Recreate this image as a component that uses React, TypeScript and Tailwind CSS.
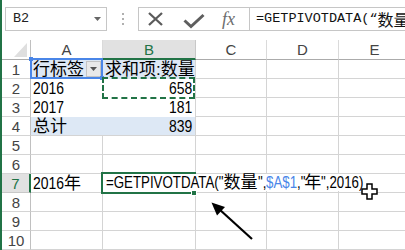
import React from "react";

const cellFont = "font-['Liberation_Sans','Noto_Sans_CJK_SC',sans-serif]";
const monoFont = "font-['Liberation_Mono','Noto_Sans_CJK_SC',monospace]";

const grid = "border-[#d4d4d4]";

function RowHead({ n, active }: { n: number; active?: boolean }) {
  return (
    <div
      className={
        "h-[19px] flex items-center justify-center text-[15px] leading-none border-b " +
        (active
          ? "bg-[#e1e1e1] text-[#217346] border-r-2 border-r-[#217346] border-b-[#c8c8c8]"
          : "text-[#444] border-r border-r-[#c0c0c0] border-b-[#d4d4d4]")
      }
    >
      {n}
    </div>
  );
}

function Cell({
  children,
  className = "",
}: {
  children?: React.ReactNode;
  className?: string;
}) {
  return (
    <div
      className={
        "h-[19px] flex items-center whitespace-nowrap text-[17px] leading-none text-black " +
        className
      }
    >
      {children}
    </div>
  );
}

function NumL({ children }: { children: React.ReactNode }) {
  return <span className="inline-block origin-left scale-x-[0.82]">{children}</span>;
}

function NumR({ children }: { children: React.ReactNode }) {
  return <span className="inline-block origin-right scale-x-[0.82]">{children}</span>;
}

export default function App() {
  const emptyRows = [5, 6, 8, 9, 10];
  return (
    <div className={"relative w-[405px] h-[250px] overflow-hidden bg-white flex " + cellFont}>
      <div className="w-[2px] shrink-0 bg-[#217346]" />
      <div className="flex-1 flex flex-col min-w-0">
        {/* Formula bar */}
        <div className="h-[40px] shrink-0 flex items-start pt-[7px]">
          <div className="ml-[3px] w-[102px] h-[24px] border border-[#c6c6c6] flex items-center justify-between pl-[7px] pr-[5px]">
            <span className={"text-[13.5px] text-[#222] " + monoFont}>B2</span>
            <svg width="7" height="4" viewBox="0 0 7 4">
              <path d="M0 0 H7 L3.5 4 Z" fill="#666" />
            </svg>
          </div>
          <div className="w-[31px] h-[24px] flex flex-col items-center justify-center gap-[3px]">
            <div className="w-[2px] h-[2px] bg-[#b0b0b0]" />
            <div className="w-[2px] h-[2px] bg-[#b0b0b0]" />
            <div className="w-[2px] h-[2px] bg-[#b0b0b0]" />
          </div>
          <div className="flex-1 h-[24px] border-y border-l border-[#c6c6c6] flex min-w-0 overflow-hidden">
            <div className="relative w-[110px] shrink-0 h-full">
              <svg className="absolute left-[8px] top-[3px]" width="17" height="16" viewBox="0 0 17 16">
                <path d="M2 2 L15 14 M15 2 L2 14" stroke="#5b5b5b" strokeWidth="2.3" fill="none" />
              </svg>
              <svg className="absolute left-[44px] top-[5px]" width="22" height="16" viewBox="0 0 22 16">
                <path d="M1.5 7.5 L8 13.5 L20.5 2" stroke="#5e5e5e" strokeWidth="3" fill="none" />
              </svg>
              <span className="absolute left-[83px] top-[1px] text-[18px] leading-[20px] italic text-[#6d6d6d] font-['Liberation_Serif',serif]">
                fx
              </span>
            </div>
            <div className="border-l border-[#c6c6c6] h-full flex items-center pl-[6px] whitespace-nowrap">
              <span className={"text-[13.5px] text-[#111] " + monoFont}>=GETPIVOTDATA(“</span>
              <span className="text-[16px] text-[#111] font-['Noto_Sans_CJK_SC',sans-serif] leading-none">
                数量
              </span>
            </div>
          </div>
        </div>

        {/* Grid */}
        <div className="grid grid-cols-[29px_72px_93px_71px_72px_72px]">
          {/* header row */}
          <div className="h-[20px] border-r border-r-[#c0c0c0] border-b border-b-[#ababab] relative">
            <svg className="absolute left-[12px] top-[3px]" width="13" height="14" viewBox="0 0 13 14">
              <path d="M13 0 V14 H0 Z" fill="#dfdfdf" />
            </svg>
          </div>
          <div className="h-[20px] flex items-center justify-center text-[15px] leading-none text-[#444] border-r border-r-[#dadada] border-b border-b-[#ababab]">
            A
          </div>
          <div className="h-[20px] flex items-center justify-center text-[15px] leading-none text-[#217346] bg-[#e1e1e1] border-r border-r-[#c8c8c8] border-b-2 border-b-[#217346]">
            B
          </div>
          <div className="h-[20px] flex items-center justify-center text-[15px] leading-none text-[#444] border-r border-r-[#dadada] border-b border-b-[#ababab]">
            C
          </div>
          <div className="h-[20px] flex items-center justify-center text-[15px] leading-none text-[#444] border-r border-r-[#dadada] border-b border-b-[#ababab]">
            D
          </div>
          <div className="h-[20px] flex items-center justify-center text-[15px] leading-none text-[#444] border-r border-r-[#dadada] border-b border-b-[#ababab]">
            E
          </div>

          {/* row 1 */}
          <RowHead n={1} />
          <Cell className="bg-[#dde8f5] pl-[2px] relative">
            行标签
            <div className="absolute right-[2px] top-[1px] w-[15px] h-[16px] bg-[#e9e9e9] border border-[#c4c4c4] flex items-center justify-center">
              <svg width="7" height="4" viewBox="0 0 7 4">
                <path d="M0 0 H7 L3.5 4 Z" fill="#555" />
              </svg>
            </div>
          </Cell>
          <Cell className={"bg-[#dde8f5] pl-[2px] border-r " + grid}>求和项:数量</Cell>
          <Cell className={"border-r border-b " + grid} />
          <Cell className={"border-r border-b " + grid} />
          <Cell className={"border-r border-b " + grid} />

          {/* row 2 */}
          <RowHead n={2} />
          <Cell className="pl-[2px]">
            <NumL>2016</NumL>
          </Cell>
          <Cell className={"justify-end pr-[3px] border-r " + grid}>
            <NumR>658</NumR>
          </Cell>
          <Cell className={"border-r border-b " + grid} />
          <Cell className={"border-r border-b " + grid} />
          <Cell className={"border-r border-b " + grid} />

          {/* row 3 */}
          <RowHead n={3} />
          <Cell className="pl-[2px]">
            <NumL>2017</NumL>
          </Cell>
          <Cell className={"justify-end pr-[3px] border-r " + grid}>
            <NumR>181</NumR>
          </Cell>
          <Cell className={"border-r border-b " + grid} />
          <Cell className={"border-r border-b " + grid} />
          <Cell className={"border-r border-b " + grid} />

          {/* row 4 */}
          <RowHead n={4} />
          <Cell className={"bg-[#dde8f5] pl-[2px] border-b " + grid}>总计</Cell>
          <Cell className={"bg-[#dde8f5] justify-end pr-[3px] border-r border-b " + grid}>
            <NumR>839</NumR>
          </Cell>
          <Cell className={"border-r border-b " + grid} />
          <Cell className={"border-r border-b " + grid} />
          <Cell className={"border-r border-b " + grid} />

          {/* rows 5-6 */}
          {emptyRows.slice(0, 2).map((n) => (
            <React.Fragment key={n}>
              <RowHead n={n} />
              <Cell className={"border-r border-b " + grid} />
              <Cell className={"border-r border-b " + grid} />
              <Cell className={"border-r border-b " + grid} />
              <Cell className={"border-r border-b " + grid} />
              <Cell className={"border-r border-b " + grid} />
            </React.Fragment>
          ))}

          {/* row 7 */}
          <RowHead n={7} active />
          <Cell className={"pl-[2px] border-r border-b " + grid}>
            <span className="inline-block w-[31px] shrink-0">
              <NumL>2016</NumL>
            </span>
            <span>年</span>
          </Cell>
          <Cell className={"border-r border-b " + grid} />
          <Cell className={"border-r border-b " + grid} />
          <Cell className={"border-r border-b " + grid} />
          <Cell className={"border-r border-b " + grid} />

          {/* rows 8-10 */}
          {emptyRows.slice(2).map((n) => (
            <React.Fragment key={n}>
              <RowHead n={n} />
              <Cell className={"border-r border-b " + grid} />
              <Cell className={"border-r border-b " + grid} />
              <Cell className={"border-r border-b " + grid} />
              <Cell className={"border-r border-b " + grid} />
              <Cell className={"border-r border-b " + grid} />
            </React.Fragment>
          ))}
        </div>
      </div>

      {/* A1 range-finder border */}
      <div className="absolute left-[30px] top-[58px] w-[73px] h-[21px] border-2 border-[#4a86e8] pointer-events-none" />
      <div className="absolute left-[29px] top-[57px] w-[4px] h-[4px] bg-[#4a86e8]" />
      <div className="absolute left-[100px] top-[76px] w-[4px] h-[4px] bg-[#4a86e8]" />

      {/* B2 marching ants */}
      <div className="absolute left-[102px] top-[77px] w-[93px] h-[22px] border-2 border-dashed border-[#217346]" />

      {/* B7 active cell */}
      <div className="absolute left-[101px] top-[172px] w-[95px] h-[22px] border-2 border-[#217346]" />
      <div className="absolute left-[191px] top-[190px] w-[6px] h-[6px] bg-[#217346] border border-white" />

      {/* in-cell editor text */}
      <div className="absolute left-[103px] top-[174px] h-[17px] bg-white pl-[3px] pr-[1px] flex items-center whitespace-nowrap text-[16px] leading-none text-black">
        <span className="inline-block shrink-0 w-[117.5px]">
          <span className="inline-block origin-left scale-x-[0.83]">=GETPIVOTDATA("</span>
        </span>
        <span className="shrink-0 text-[17px]">数量</span>
        <span className="inline-block shrink-0 w-[8.4px]">
          <span className="inline-block origin-left scale-x-[0.83]">",</span>
        </span>
        <span className="inline-block shrink-0 w-[31px] text-[#4a86e8]">
          <span className="inline-block origin-left scale-x-[0.83]">$A$1</span>
        </span>
        <span className="inline-block shrink-0 w-[7.4px]">
          <span className="inline-block origin-left scale-x-[0.83]">,"</span>
        </span>
        <span className="shrink-0 text-[17px]">年</span>
        <span className="inline-block shrink-0 w-[42.4px]">
          <span className="inline-block origin-left scale-x-[0.83]">",2016)</span>
        </span>
      </div>

      {/* cursor + arrow */}
      <svg className="absolute left-0 top-0 pointer-events-none" width="405" height="250" viewBox="0 0 405 250">
        <path
          d="M367 184 H372 V189 H377 V194 H372 V199 H367 V194 H362 V189 H367 Z"
          fill="#fff"
          stroke="#000"
          strokeWidth="1.5"
        />
        <line x1="252" y1="239" x2="219" y2="209" stroke="#000" strokeWidth="2.2" />
        <path d="M211.5 202.5 L225 207 L217 215.5 Z" fill="#000" />
      </svg>
    </div>
  );
}
